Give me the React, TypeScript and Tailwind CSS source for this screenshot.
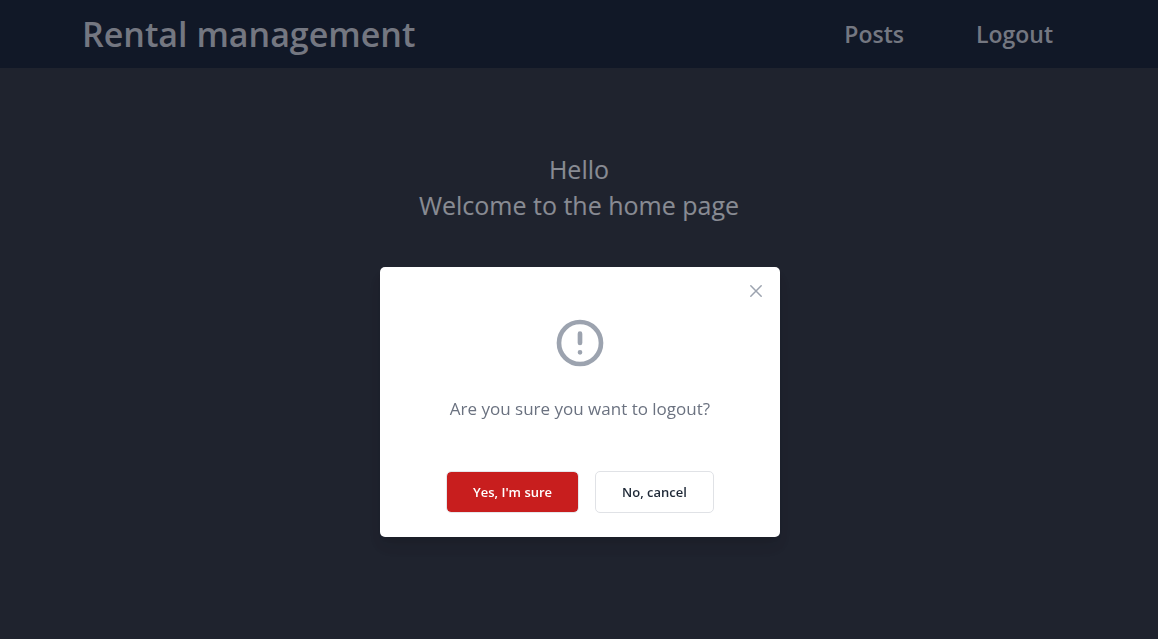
import { useState } from 'react';

export default function App() {
  const [open, setOpen] = useState(true);

  return (
    <div className="min-h-screen bg-[#2d2e34] font-['Open_Sans','Noto_Sans',sans-serif]">
      <header className="flex h-[68px] items-center justify-between bg-[#111827] pr-[105px] pl-[82px] pb-px font-semibold text-[#d6d6db]">
        <h1 className="text-[34px] leading-[40px]">Rental management</h1>
        <nav className="flex gap-[72px] text-[23px] leading-8">
          <a href="#posts">Posts</a>
          <button type="button" onClick={() => setOpen(true)}>
            Logout
          </button>
        </nav>
      </header>

      <main className="pt-[83px] text-center text-[25px] leading-9 text-white">
        <p>Hello</p>
        <p>Welcome to the home page</p>
      </main>

      {open && (
        <div className="fixed inset-0 overflow-y-auto bg-[#111827]/50 pt-[267px] pb-8 pl-0.5">
          <div
            role="dialog"
            aria-modal="true"
            aria-labelledby="logout-question"
            className="relative mx-auto flex w-full max-w-[400px] flex-col items-center rounded-[5px] bg-white pt-12 pb-6 shadow-lg"
          >
            <button
              type="button"
              aria-label="Close"
              onClick={() => setOpen(false)}
              className="absolute top-2 right-2 p-1.5 text-[#9ca3af]"
            >
              <svg className="size-5" viewBox="0 0 20 20" fill="none" stroke="currentColor" strokeWidth="1.5" strokeLinecap="round">
                <path d="M4.8 4.8l10.4 10.4M15.2 4.8L4.8 15.2" />
              </svg>
            </button>
            <svg
              aria-hidden="true"
              className="size-14 text-[#9ca3af]"
              fill="none"
              stroke="currentColor"
              strokeWidth="2"
              strokeLinecap="round"
              strokeLinejoin="round"
              viewBox="0 0 24 24"
            >
              <path d="M12 8v4m0 4h.01M21 12a9 9 0 11-18 0 9 9 0 0118 0z" />
            </svg>
            <p id="logout-question" className="mt-6 mb-12 text-[17px] leading-7 text-[#6b7280]">
              Are you sure you want to logout?
            </p>
            <div className="flex gap-4 text-[13px] leading-5 font-semibold">
              <button
                type="button"
                onClick={() => setOpen(false)}
                className="rounded-[5px] border border-[#e5e7eb] bg-[#c81e1e] bg-clip-padding px-[26px] py-2.5 text-white"
              >
                Yes, I'm sure
              </button>
              <button
                type="button"
                onClick={() => setOpen(false)}
                className="rounded-[5px] border border-[#e0e2e6] bg-white px-[26px] py-2.5 text-[#1f2937]"
              >
                No, cancel
              </button>
            </div>
          </div>
        </div>
      )}
    </div>
  );
}
